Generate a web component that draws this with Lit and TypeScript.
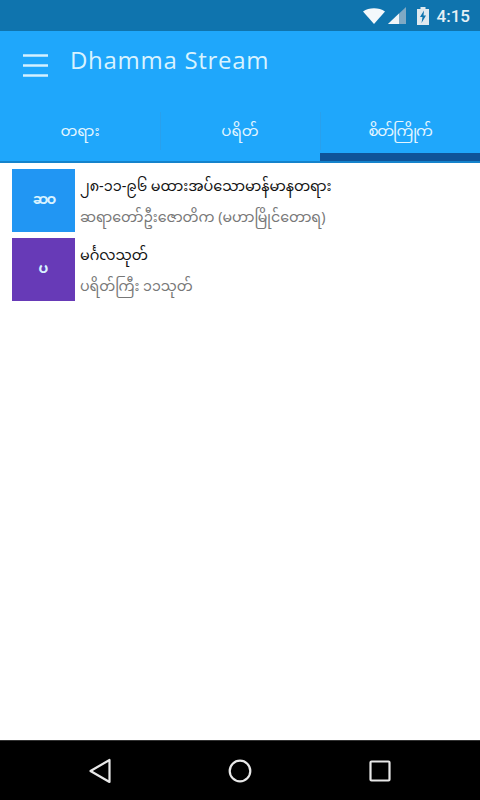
import { LitElement, html, css } from "lit";
import { customElement } from "lit/decorators.js";

const MM = css`"Noto Sans Myanmar", "Padauk", "Myanmar Text", "Noto Sans", "DejaVu Sans", sans-serif`;

@customElement("app-root")
export class AppRoot extends LitElement {
  static styles = css`
    :host { display: flex; flex-direction: column; width: 480px; height: 800px; background: #fff; overflow: hidden; font-family: "Open Sans", sans-serif; }
    .status { height: 31px; background: #0f74ae; display: flex; align-items: center; justify-content: flex-end; padding-right: 10px; box-sizing: border-box; color: #e6f0f5; font: 500 17px Roboto, sans-serif; }
    .status svg { display: block; }
    .signal { margin-left: 3px; }
    .battery { margin-left: 11px; }
    .time { margin-left: 8px; }
    .bar { height: 69px; background: #1fa7fb; display: flex; align-items: flex-start; color: #dff4ff; }
    .menu { margin: 23px 0 0 23px; display: block; }
    .title { margin: 14px 0 0 22px; font: 400 24px/30px "Open Sans", sans-serif; letter-spacing: 0.7px; color: #d8f3ff; }
    .tabs { height: 63px; background: #1fa7fb; border-bottom: 2px solid #1583cb; box-sizing: border-box; display: grid; grid-template-columns: repeat(3, 160px); }
    .tab { position: relative; display: flex; justify-content: center; align-items: center; padding: 4px 0 0; box-sizing: border-box; color: #e4f6ff; font-size: 15px; font-family: ${MM}; }
    .tab + .tab::before { content: ""; position: absolute; left: 0; top: 12px; bottom: 11px; width: 1px; background: #29a0ec; }
    .tab.on { letter-spacing: -1.2px; }
    .tab.on::after { content: ""; position: absolute; left: 0; right: 0; bottom: 0; height: 8px; background: #0f5499; }
    .list { flex: 1; padding: 6px 12px 0; display: flex; flex-direction: column; gap: 6px; }
    .row { display: flex; height: 63px; }
    .av { width: 63px; height: 63px; flex: none; display: flex; align-items: center; justify-content: center; color: #d8f3ff; font-size: 14px; font-weight: 700; font-family: ${MM}; }
    .av.tight { letter-spacing: -2px; }
    .blue { background: #2196f3; }
    .purple { background: #673ab7; }
    .txt { margin-left: 5px; display: flex; flex-direction: column; font-family: ${MM}; }
    .t1 { height: 37px; line-height: 37px; font-size: 14.4px; color: #111; white-space: nowrap; }
    .t2 { height: 26px; line-height: 26px; font-size: 14.2px; color: #777; white-space: nowrap; }
    .nav { height: 60px; background: #000; border-top: 1px solid #333; box-sizing: border-box; display: grid; grid-template-columns: repeat(3, 140px); padding: 0 30px; align-items: center; justify-items: center; }
    .nav svg { display: block; }
  `;
  render() {
    return html`
      <div class="status">
        <svg width="22" height="16" viewBox="0 0 22 16"><path d="M0 3.500C6-.8 16-.8 22 3.500L11 16Z" fill="#f4f8fb"/></svg>
        <svg class="signal" width="18" height="17" viewBox="0 0 18 17"><path d="M0 17L18 0V17Z" fill="#7fa9c4"/><path d="M0 17L11 6.600V17Z" fill="#f0f5f8"/></svg>
        <svg class="battery" width="12" height="19" viewBox="0 0 12 19"><path d="M0 3H3.500V1H8.500V3H12V19H0Z" fill="#dfe9ef"/><path d="M7 4.500L3 11H5.500L4.500 17L9 9.500H6.500Z" fill="#0f74ae"/></svg>
        <span class="time">4:15</span>
      </div>
      <div class="bar">
        <svg class="menu" width="25" height="23" viewBox="0 0 25 23"><path d="M0 1.500H25M0 11.500H25M0 21.500H25" stroke="#d4f1ff" stroke-width="2.600"/></svg>
        <div class="title">Dhamma Stream</div>
      </div>
      <div class="tabs">
        <div class="tab">တရား</div>
        <div class="tab">ပရိတ်</div>
        <div class="tab on">စိတ်ကြိုက်</div>
      </div>
      <div class="list">
        <div class="row">
          <div class="av blue tight">ဆဝ</div>
          <div class="txt"><div class="t1">၂၈-၁၁-၉၆ မထားအပ်သောမာန်မာနတရား</div><div class="t2">ဆရာတော်ဦးဇောတိက (မဟာမြိုင်တောရ)</div></div>
        </div>
        <div class="row">
          <div class="av purple">ပ</div>
          <div class="txt"><div class="t1">မင်္ဂလသုတ်</div><div class="t2">ပရိတ်ကြီး ၁၁သုတ်</div></div>
        </div>
      </div>
      <div class="nav">
        <svg width="24" height="26" viewBox="0 0 24 26"><path d="M21.500 2V24L2.500 13Z" fill="none" stroke="#e8e8e8" stroke-width="2.200" stroke-linejoin="round"/></svg>
        <svg width="24" height="24" viewBox="0 0 24 24"><circle cx="12" cy="12" r="10.300" fill="none" stroke="#e8e8e8" stroke-width="2.200"/></svg>
        <svg width="22" height="22" viewBox="0 0 22 22"><rect x="1.500" y="1.500" width="19" height="19" rx="1" fill="none" stroke="#e8e8e8" stroke-width="2.200"/></svg>
      </div>
    `;
  }
}
